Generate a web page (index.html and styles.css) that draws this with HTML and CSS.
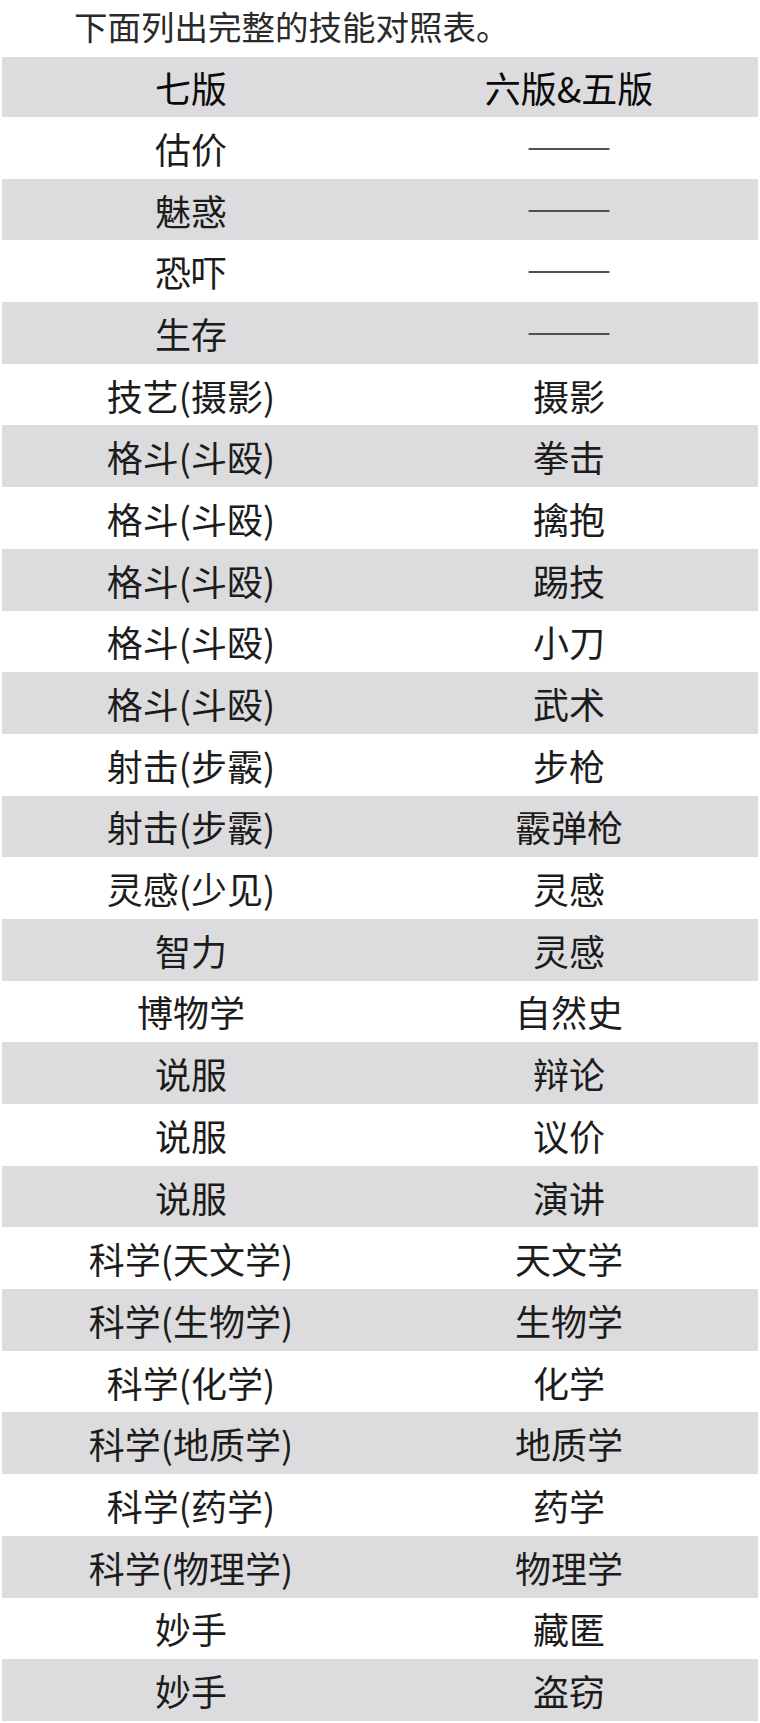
FILE: index.html
```html
<!DOCTYPE html>
<html lang="zh-CN">
<head>
<meta charset="utf-8">
<title>技能对照表</title>
<link rel="stylesheet" href="styles.css">
</head>
<body>
<p class="intro">下面列出完整的技能对照表。</p>
<table class="skills">
  <thead>
    <tr><th>七版</th><th>六版&amp;五版</th></tr>
  </thead>
  <tbody>
    <tr><td>估价</td><td><span class="dash">——</span></td></tr>
    <tr><td>魅惑</td><td><span class="dash">——</span></td></tr>
    <tr><td>恐吓</td><td><span class="dash">——</span></td></tr>
    <tr><td>生存</td><td><span class="dash">——</span></td></tr>
    <tr><td>技艺(摄影)</td><td>摄影</td></tr>
    <tr><td>格斗(斗殴)</td><td>拳击</td></tr>
    <tr><td>格斗(斗殴)</td><td>擒抱</td></tr>
    <tr><td>格斗(斗殴)</td><td>踢技</td></tr>
    <tr><td>格斗(斗殴)</td><td>小刀</td></tr>
    <tr><td>格斗(斗殴)</td><td>武术</td></tr>
    <tr><td>射击(步霰)</td><td>步枪</td></tr>
    <tr><td>射击(步霰)</td><td>霰弹枪</td></tr>
    <tr><td>灵感(少见)</td><td>灵感</td></tr>
    <tr><td>智力</td><td>灵感</td></tr>
    <tr><td>博物学</td><td>自然史</td></tr>
    <tr><td>说服</td><td>辩论</td></tr>
    <tr><td>说服</td><td>议价</td></tr>
    <tr><td>说服</td><td>演讲</td></tr>
    <tr><td>科学(天文学)</td><td>天文学</td></tr>
    <tr><td>科学(生物学)</td><td>生物学</td></tr>
    <tr><td>科学(化学)</td><td>化学</td></tr>
    <tr><td>科学(地质学)</td><td>地质学</td></tr>
    <tr><td>科学(药学)</td><td>药学</td></tr>
    <tr><td>科学(物理学)</td><td>物理学</td></tr>
    <tr><td>妙手</td><td>藏匿</td></tr>
    <tr><td>妙手</td><td>盗窃</td></tr>
  </tbody>
</table>
</body>
</html>
```
FILE: styles.css
```css
html, body {
  margin: 0;
  padding: 0;
  background: #ffffff;
}

body {
  font-family: "Noto Sans CJK SC", "Noto Sans", sans-serif;
  color: #1c1c1c;
}

.intro {
  margin: 0;
  height: 57px;
  line-height: 52px;
  padding-left: 74px;
  font-size: 33.5px;
  color: #2a2a2a;
  white-space: nowrap;
}

.skills {
  width: 756px;
  margin: 0 2px;
  border-collapse: collapse;
  border-spacing: 0;
  table-layout: fixed;
}

.skills th,
.skills td {
  width: 50%;
  height: 61.7px;
  padding: 0;
  text-align: center;
  vertical-align: middle;
  font-size: 36px;
  font-weight: 400;
  line-height: 40px;
  color: #1c1c1c;
}

.skills thead th {
  height: 60px;
  font-weight: 400;
  color: #0a0a0a;
}

.skills thead tr,
.skills tbody tr:nth-child(even) {
  background: #dcdbdd;
}

.dash {
  display: inline-block;
  font-size: 51px;
  color: #505050;
  transform: scaleY(0.6);
}
```
